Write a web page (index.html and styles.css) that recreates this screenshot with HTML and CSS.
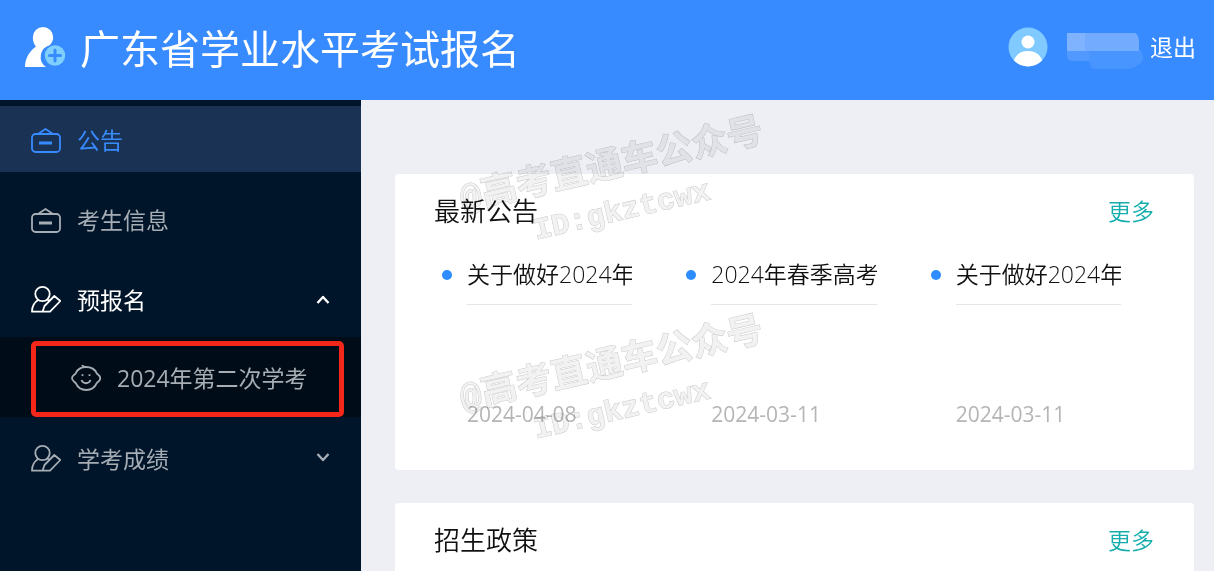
FILE: index.html
```html
<!DOCTYPE html>
<html lang="zh-CN">
<head>
    <meta charset="UTF-8">
    <meta name="viewport" content="width=device-width, initial-scale=1.0">
    <title>广东省学业水平考试报名</title>
    <link rel="stylesheet" href="styles.css">
</head>
<body>
    <!-- shared icons -->
    <svg class="sprite" aria-hidden="true">
        <symbol id="icon-board" viewBox="0 0 30 30">
            <rect x="1" y="9" width="28" height="18" rx="3.5"/>
            <path d="M7 9l7.5-5L22 9"/>
            <path d="M8 18h13" stroke-width="3"/>
        </symbol>
        <symbol id="icon-user-edit" viewBox="0 0 30 30">
            <circle cx="11.5" cy="9" r="7.2"/>
            <path d="M7.500 14.800C3 17.500 1 21.500 1 26.700h18L29.300 16 23.300 11 13.500 21 11.500 26.700M16 14.500l3 1.500"/>
        </symbol>
        <symbol id="icon-face" viewBox="0 0 30 30">
            <path d="M15 4C10 4 6.500 6.200 4.800 10.200 4 11.500 1 12.500 1 15.200s3 3.700 3.800 5C6.500 24.200 10 27 15.300 27s8.700-2.800 10.400-6.800c.8-1.300 3.600-2.300 3.600-5s-2.800-3.700-3.600-5C24 6.200 20 4 15 4c-2 0-3.500-.6-3.800-2"/>
            <path d="M10.500 17c1.500 4.300 7.500 4.300 9 0M11.500 11.200v1.800M18.500 11.200v1.800"/>
        </symbol>
    </svg>

    <header class="header">
        <div class="brand">
            <svg class="logo" viewBox="0 0 42 42" aria-hidden="true">
                <path d="M19 1a10.200 10.200 0 0 1 10.200 10.200c0 3.100-1.200 5.500-3.600 8A12.200 12.200 0 0 0 22 41H1c0-8.500 4.500-16 11-20.500-2-2.200-3.200-5.500-3.200-9.300A10.200 10.200 0 0 1 19 1z" fill="#fff"/>
                <circle cx="31" cy="29.500" r="10.200" fill="#7fd0ff"/>
                <path d="M31 24v11M25.500 29.500h11" stroke="#388bff" stroke-width="3" stroke-linecap="round"/>
            </svg>
            <h1>广东省学业水平考试报名</h1>
        </div>
        <div class="user">
            <svg class="avatar" viewBox="0 0 40 40" aria-hidden="true">
                <clipPath id="avatar-clip"><circle cx="20" cy="20" r="19.500"/></clipPath>
                <g clip-path="url(#avatar-clip)">
                    <rect width="40" height="40" fill="#80caff"/>
                    <circle cx="20" cy="15" r="6.500" fill="#fff"/>
                    <path d="M5 36c2-8 7-12 15-12s13 4 15 12v4H5z" fill="#fff"/>
                </g>
            </svg>
            <svg class="user-mask" viewBox="0 0 78 36" aria-hidden="true">
                <path d="M1 17h24v11H8c-5 0-7-2-7-5z" fill="#5299ff"/>
                <path d="M24 17h50c5 6 4 12-2 15-4 3-8 4-12 4H28c-3 0-4-4-5-8z" fill="#4895ff"/>
                <path d="M1 0h18v18H1z" fill="#80b3ff"/>
                <path d="M19 0h50c2 1 4 4 4 8v10H19z" fill="#73abff"/>
            </svg>
            <a class="logout" href="#">退出</a>
        </div>
    </header>

    <div class="layout">
        <nav class="sidebar">
            <ul class="menu">
                <li>
                    <a class="menu-item active" href="#">
                        <svg class="icon"><use href="#icon-board"/></svg>
                        <span>公告</span>
                    </a>
                </li>
                <li>
                    <a class="menu-item" href="#">
                        <svg class="icon"><use href="#icon-board"/></svg>
                        <span>考生信息</span>
                    </a>
                </li>
                <li>
                    <button class="menu-item open" type="button" aria-expanded="true">
                        <svg class="icon"><use href="#icon-user-edit"/></svg>
                        <span>预报名</span>
                        <svg class="arrow" viewBox="0 0 14 14"><path d="M1.500 10L7 4l5.500 6"/></svg>
                    </button>
                    <ul class="submenu">
                        <li>
                            <a class="submenu-item" href="#">
                                <svg class="icon"><use href="#icon-face"/></svg>
                                <span>2024年第二次学考</span>
                            </a>
                        </li>
                    </ul>
                </li>
                <li>
                    <button class="menu-item" type="button" aria-expanded="false">
                        <svg class="icon"><use href="#icon-user-edit"/></svg>
                        <span>学考成绩</span>
                        <svg class="arrow" viewBox="0 0 14 14"><path d="M1.500 2L7 8l5.500-6"/></svg>
                    </button>
                </li>
            </ul>
        </nav>

        <main class="content">
            <section class="card">
                <div class="card-head">
                    <h2>最新公告</h2>
                    <a class="more" href="#">更多</a>
                </div>
                <ul class="news">
                    <li class="news-item">
                        <a class="news-title" href="#">关于做好2024年</a>
                        <time class="news-date">2024-04-08</time>
                    </li>
                    <li class="news-item">
                        <a class="news-title" href="#">2024年春季高考</a>
                        <time class="news-date">2024-03-11</time>
                    </li>
                    <li class="news-item">
                        <a class="news-title" href="#">关于做好2024年</a>
                        <time class="news-date">2024-03-11</time>
                    </li>
                </ul>
            </section>

            <section class="card">
                <div class="card-head">
                    <h2>招生政策</h2>
                    <a class="more" href="#">更多</a>
                </div>
            </section>

            <div class="watermark">@高考直通车公众号<br><small>ID:gkztcwx</small></div>
            <div class="watermark watermark-low">@高考直通车公众号<br><small>ID:gkztcwx</small></div>
        </main>
    </div>
</body>
</html>
```

FILE: styles.css
```css
* {
    box-sizing: border-box;
}

body {
    margin: 0;
    height: 100vh;
    display: flex;
    flex-direction: column;
    overflow: hidden;
    font-family: "Open Sans", "Noto Sans CJK SC", sans-serif;
    font-size: 23px;
    line-height: 36px;
    color: #111;
    background-color: #eeeff4;
}

h1, h2 {
    margin: 0;
    font-weight: 400;
}

ul {
    margin: 0;
    padding: 0;
    list-style: none;
}

a {
    color: inherit;
    text-decoration: none;
}

.sprite {
    display: none;
}

/* header */
.header {
    flex: none;
    display: flex;
    align-items: center;
    justify-content: space-between;
    height: 100px;
    padding: 0 18px 6px 24px;
    color: #fff;
    background-color: #388bff;
}

.brand {
    display: flex;
    align-items: center;
    gap: 14px;
}

.brand h1 {
    padding-top: 4px;
    font-size: 40px;
    line-height: 60px;
}

.logo {
    width: 42px;
    height: 42px;
}

.user {
    display: flex;
    align-items: center;
}

.avatar {
    width: 40px;
    height: 40px;
}

.user-mask {
    width: 78px;
    height: 36px;
    margin: 8px 6px 0 18px;
}

/* sidebar */
.layout {
    flex: 1;
    display: flex;
    min-height: 0;
}

.sidebar {
    flex: none;
    width: 361px;
    padding-top: 6px;
    background-color: #001529;
}

.menu {
    display: flex;
    flex-direction: column;
    gap: 14px;
}

.menu-item,
.submenu-item {
    display: flex;
    align-items: center;
    gap: 16px;
    width: 100%;
    height: 66px;
    padding: 1px 31px 0;
    color: #a6adb4;
}

.menu-item {
    border: none;
    background: none;
    font: inherit;
    text-align: left;
    cursor: pointer;
}

.menu-item.active {
    color: #388bff;
    background-color: #1a3254;
}

.menu-item.open {
    color: #fff;
}

.icon,
.arrow {
    flex: none;
    fill: none;
    stroke: currentColor;
    stroke-width: 1.8;
    stroke-linejoin: round;
    stroke-linecap: butt;
}

.icon {
    width: 30px;
    height: 30px;
}

.arrow {
    width: 14px;
    height: 14px;
    margin-left: auto;
    stroke-width: 2.4;
}

.submenu {
    margin-top: 5px;
    margin-bottom: -6px;
    background-color: #000c17;
}

.submenu li {
    padding: 4px 17px 0 31px;
}

.submenu-item {
    height: 76px;
    padding: 0 0 3px 35px;
    border: 5px solid #f5261a;
    border-radius: 5px;
}

/* content */
.content {
    position: relative;
    flex: 1;
    display: flex;
    flex-direction: column;
    gap: 33px;
    min-width: 0;
    padding: 74px 20px 0 34px;
    overflow: hidden;
}

.card {
    flex: none;
    min-height: 296px;
    padding: 18px 40px 32px 39px;
    border-radius: 4px;
    background-color: #fff;
}

.card-head {
    display: flex;
    align-items: center;
    justify-content: space-between;
}

.card-head h2 {
    font-size: 26px;
    font-weight: 350;
    line-height: 38px;
}

.more {
    font-weight: 350;
    color: #16adad;
}

.news {
    display: grid;
    grid-template-columns: repeat(3, 1fr);
    gap: 46px;
    margin-top: 19px;
    padding-right: 33px;
}

.news-item {
    display: grid;
    grid-template-columns: 33px 1fr;
}

.news-item::before {
    content: "";
    width: 10px;
    height: 10px;
    margin: 21px 0 0 8px;
    border-radius: 50%;
    background-color: #2d8cff;
}

.news-title {
    overflow: hidden;
    white-space: nowrap;
    padding: 7px 0 12px;
    border-bottom: 1px solid #e6e6e6;
    font-weight: 350;
}

.news-date {
    grid-column: 2;
    margin-top: 91px;
    font-size: 21px;
    color: #b5b5b5;
}

/* slanted marks over the cards */
.watermark {
    position: absolute;
    top: 45px;
    left: 91px;
    width: 330px;
    text-align: center;
    font-family: "Liberation Mono", "Noto Sans CJK SC", monospace;
    font-size: 36px;
    font-weight: 700;
    line-height: 44px;
    color: #f2f2f2;
    -webkit-text-stroke: 1px #cacaca;
    paint-order: stroke fill;
    mix-blend-mode: multiply;
    transform: rotate(-13deg);
    pointer-events: none;
}

.watermark small {
    font-size: 30px;
}

.watermark-low {
    top: 244px;
}
```
